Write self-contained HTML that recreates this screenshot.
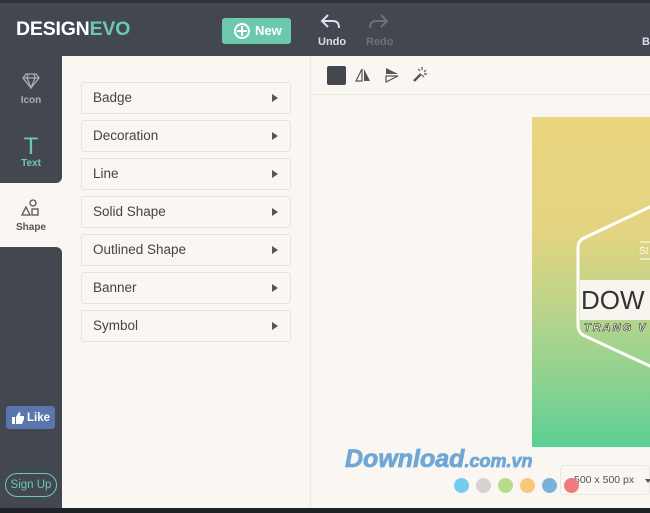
<!DOCTYPE html>
<html><head><style>
*{margin:0;padding:0;box-sizing:border-box}
body{width:650px;height:513px;overflow:hidden;background:#faf6f1;font-family:"Liberation Sans",sans-serif;position:relative}
.top{position:absolute;left:0;top:0;width:650px;height:56px;background:#434850;border-top:3px solid #2f333a}
.logo{position:absolute;left:16px;top:15px;font-size:19.5px;font-weight:bold;color:#fff;letter-spacing:-0.2px}
.logo span{color:#6cc9b0}
.new{position:absolute;left:222px;top:15px;width:69px;height:26px;background:#6cc9b0;border-radius:3px;color:#fff;font-weight:bold;font-size:13px;line-height:26px;padding-left:33px}
.new i{position:absolute;left:12px;top:5px;width:16px;height:16px;border:2px solid #fff;border-radius:50%}
.new i:before{content:"";position:absolute;left:5px;top:1px;width:2px;height:10px;background:#fff}
.new i:after{content:"";position:absolute;left:1px;top:5px;width:10px;height:2px;background:#fff}
.ur{position:absolute;top:33px;font-size:11px;font-weight:bold}
.tab{position:absolute;left:0;width:62px;text-align:center;font-size:10px;font-weight:bold;color:#aab}
.active{background:#faf6f1;top:183px;height:64px;color:#555}
.sidebot{position:absolute;left:0;top:247px;width:62px;height:261px;background:#434850;border-top-right-radius:6px}
.sidetop{position:absolute;left:0;top:56px;width:62px;height:127px;background:#434850;border-bottom-right-radius:6px}
.item{position:absolute;left:81px;width:210px;height:32px;border:1px solid #e6e2dc;border-radius:3px;background:#faf6f1;font-size:13.5px;color:#444;line-height:30px;padding-left:11px}
.item:after{content:"";position:absolute;right:12px;top:11px;border-left:6px solid #555;border-top:4px solid transparent;border-bottom:4px solid transparent}
.vline{position:absolute;left:310px;top:56px;width:1px;height:452px;background:#ebe7e1}
.hline{position:absolute;left:311px;top:94px;width:339px;height:1px;background:#ebe7e1}
.bottom{position:absolute;left:0;top:508px;width:650px;height:5px;background:#1e2226}
.dot{position:absolute;top:478px;width:15px;height:15px;border-radius:50%}
</style></head><body>
<div class="top">
<div class="logo">DESIGN<span>EVO</span></div>
<div class="new"><i></i>New</div>
<svg style="position:absolute;left:320px;top:10px" width="22" height="18" viewBox="0 0 22 18"><path d="M8 2 L2 8 L8 14 M2 8 H13 Q19 8 19 15" fill="none" stroke="#dde" stroke-width="2"/></svg>
<div class="ur" style="left:318px;color:#dde">Undo</div>
<svg style="position:absolute;left:367px;top:10px" width="22" height="18" viewBox="0 0 22 18"><path d="M14 2 L20 8 L14 14 M20 8 H9 Q3 8 3 15" fill="none" stroke="#6b707a" stroke-width="2"/></svg>
<div class="ur" style="left:366px;color:#6b707a">Redo</div>
<div class="ur" style="left:642px;color:#dde">B</div>
</div>
<div class="sidetop"></div>
<div class="sidebot"></div>
<div class="tab active"></div>
<svg style="position:absolute;left:22px;top:73px" width="18" height="16" viewBox="0 0 18 16"><path d="M4 1 H14 L17 5 L9 15 L1 5 Z M1 5 H17 M6 1 L5 5 L9 15 L13 5 L12 1" fill="none" stroke="#aab" stroke-width="1.3"/></svg>
<div class="tab" style="top:95px">Icon</div>
<div class="tab" style="top:133px;font-size:24px;font-weight:normal;color:#6cc9b0">T</div>
<div class="tab" style="top:158px;color:#6cc9b0">Text</div>
<svg style="position:absolute;left:21px;top:199px" width="20" height="18" viewBox="0 0 20 18"><circle cx="12" cy="4" r="3" fill="none" stroke="#555" stroke-width="1.3"/><path d="M5 8 L9 16 H1 Z" fill="none" stroke="#555" stroke-width="1.3"/><rect x="11" y="10" width="6" height="6" fill="none" stroke="#555" stroke-width="1.3"/></svg>
<div class="tab" style="top:222px;color:#555">Shape</div>
<div style="position:absolute;left:6px;top:406px;width:49px;height:23px;background:#5b76aa;border-radius:3px"></div>
<svg style="position:absolute;left:12px;top:412px" width="12" height="12" viewBox="0 0 12 12"><path d="M0 5h3v7H0zM4 5 L7 0 Q9 0 8 4 H12 V7 L10 12 H4Z" fill="#fff"/></svg>
<div style="position:absolute;left:27px;top:412px;color:#fff;font-weight:bold;font-size:11.5px">Like</div>
<div style="position:absolute;left:5px;top:473px;width:52px;height:24px;border:1.5px solid #6cc9b0;border-radius:12px"></div>
<div style="position:absolute;left:5px;top:479px;width:52px;color:#6cc9b0;font-size:11.5px;text-align:center">Sign Up</div>
<div class="item" style="top:82px">Badge</div>
<div class="item" style="top:120px">Decoration</div>
<div class="item" style="top:158px">Line</div>
<div class="item" style="top:196px">Solid Shape</div>
<div class="item" style="top:234px">Outlined Shape</div>
<div class="item" style="top:272px">Banner</div>
<div class="item" style="top:310px">Symbol</div>
<div class="vline"></div><div class="hline"></div>
<div style="position:absolute;left:327px;top:66px;width:19px;height:19px;background:#434850;border-radius:2px"></div>
<svg style="position:absolute;left:355px;top:67px" width="16" height="16" viewBox="0 0 16 16"><path d="M7 2 L1 14 H7Z" fill="none" stroke="#555" stroke-width="1.2"/><path d="M9 2 L15 14 H9Z" fill="#555"/></svg>
<svg style="position:absolute;left:384px;top:67px" width="16" height="16" viewBox="0 0 16 16"><path d="M2 1 L14 7 H2Z" fill="#555"/><path d="M2 9 H14 L2 15Z" fill="none" stroke="#555" stroke-width="1.2"/></svg>
<svg style="position:absolute;left:412px;top:66px" width="16" height="16" viewBox="0 0 16 16"><path d="M2 15 L9 8" stroke="#555" stroke-width="2.5"/><path d="M10 1v3M14 4l-2 2M15 8h-3M6 3l2 2M12 11l-2-2" stroke="#555" stroke-width="1.2"/></svg>
<div style="position:absolute;left:532px;top:117px;width:118px;height:330px;background:linear-gradient(#ebd57f,#e3d481 35%,#b7d48a 60%,#8dd290 80%,#5bcf93)"></div>
<svg style="position:absolute;left:532px;top:117px" width="118" height="330"><path d="M120 89 L52 121 Q46 124 46 131 V208 Q46 216 53 219 L120 250" fill="none" stroke="#fff" stroke-width="3"/><rect x="48" y="163" width="72" height="40" fill="#f8f5ef"/><line x1="108" y1="125" x2="120" y2="125" stroke="#fff"/><text x="107" y="137" fill="#fff" font-size="10" font-family="Liberation Sans">SI</text><line x1="108" y1="142" x2="120" y2="142" stroke="#fff"/><text x="49" y="192" fill="#333" font-size="26" font-family="Liberation Sans">DOW</text><text x="52" y="214" fill="#fff" stroke="#333" stroke-width="0.6" font-size="11" font-style="italic" font-weight="bold" font-family="Liberation Sans" letter-spacing="2">TRANG V</text></svg>
<div style="position:absolute;left:345px;top:445px;font-size:25px;font-weight:bold;font-style:italic;color:#6fa8d6;-webkit-text-stroke:0.8px #6fa8d6">Download<span style="font-size:18px">.com.vn</span></div>
<div style="position:absolute;left:560px;top:465px;width:90px;height:30px;border:1px solid #ebe7e1;border-radius:4px;background:#faf6f1"></div>
<div style="position:absolute;left:574px;top:474px;font-size:10.5px;color:#555">500 x 500 px</div>
<div style="position:absolute;left:645px;top:479px;border-top:4px solid #555;border-left:3px solid transparent;border-right:3px solid transparent"></div>
<div class="dot" style="left:454px;background:#73cdef"></div>
<div class="dot" style="left:476px;background:#d6d3cf"></div>
<div class="dot" style="left:498px;background:#b8dc8c"></div>
<div class="dot" style="left:520px;background:#f5c87c"></div>
<div class="dot" style="left:542px;background:#78b2dc"></div>
<div class="dot" style="left:564px;background:#ef7a7e"></div>
<div class="bottom"></div>
</body></html>
